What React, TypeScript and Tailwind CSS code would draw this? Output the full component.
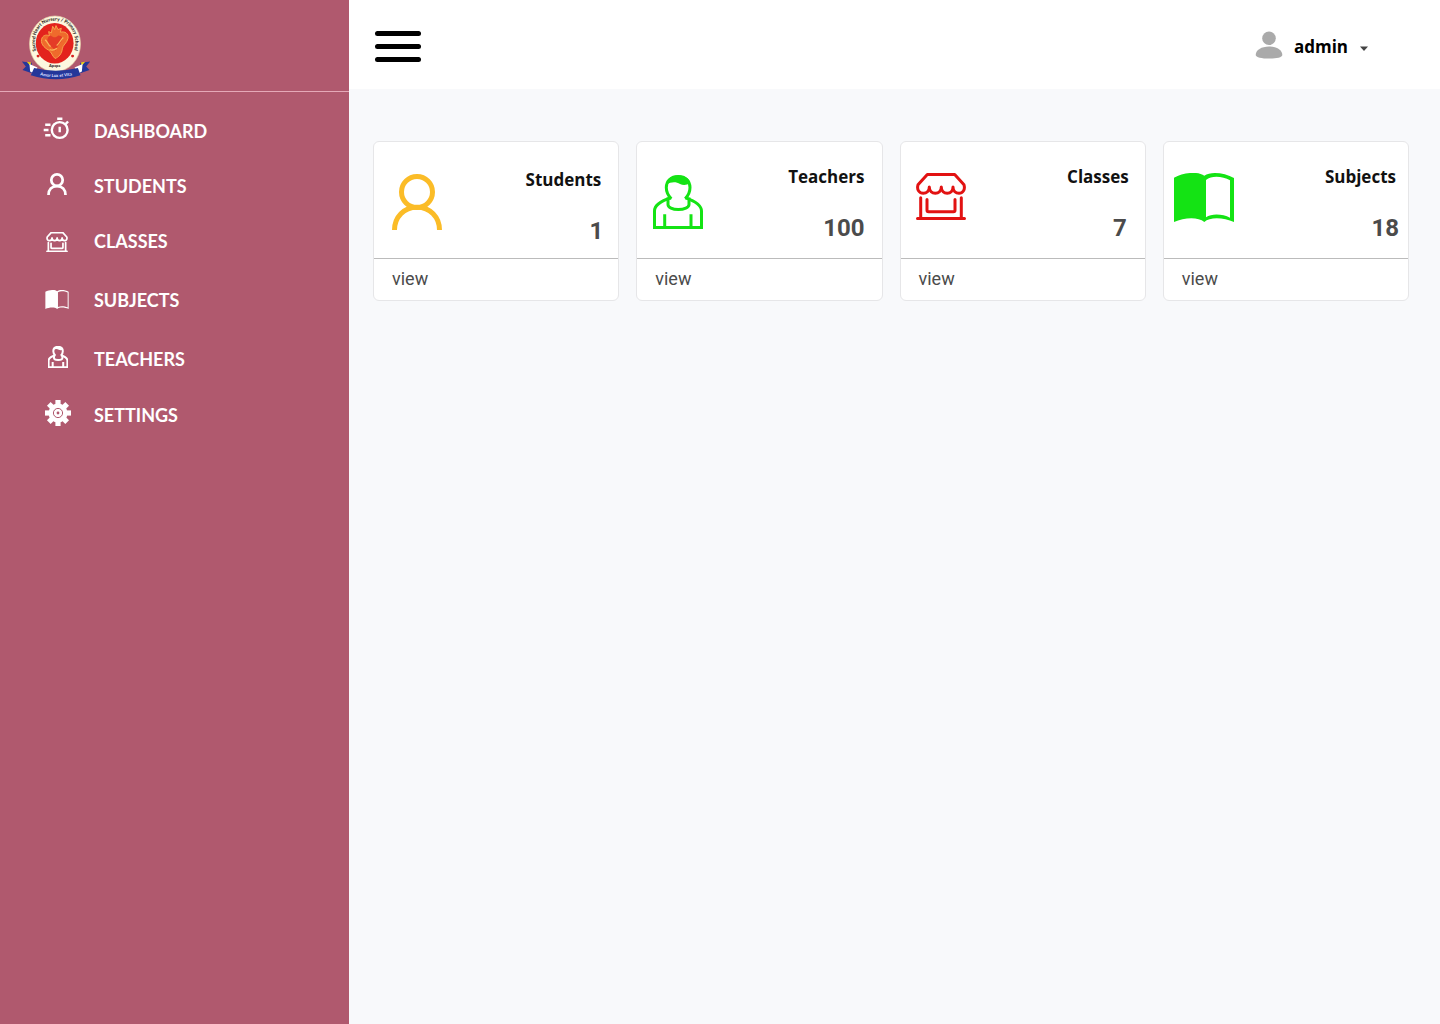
import type { ReactNode } from "react";

type IconProps = { className: string; strokeWidth: number };

function PersonIcon({ className, strokeWidth }: IconProps) {
  return (
    <svg viewBox="0 0 50 56" className={className} fill="none" stroke="currentColor" strokeWidth={strokeWidth} aria-hidden="true">
      <circle cx="25" cy="18" r={18 - strokeWidth / 2} />
      <path d={strokeWidth > 5 ? "M3.4 56C3.4 42 12 33.4 25 33.4S46.6 42 46.6 56" : "M2.5 56C2.5 43 12 33.2 25 33.2S47.5 43 47.5 56"} />
    </svg>
  );
}

function TeacherIcon({ className, strokeWidth }: IconProps) {
  return (
    <svg viewBox="0 0 50 54" className={className} fill="none" stroke="currentColor" strokeWidth={strokeWidth} aria-hidden="true">
      <path d="M18 22.8C8 26 1.5 30.5 1.5 36V52.500H48.500V36C48.5 30.5 42 26 32.5 22.8" />
      <path d="M15 22.500V29.5C15 32.5 19.5 34.5 25.3 34.5S36 32.500 36 29.500V22.500" />
      <path d="M18.300 23.800C15 20.500 13.300 16.500 13.300 12.500C13.300 6 18 1.500 25.200 1.500S37 6 37 12.500C37 16.500 35.300 20.500 32.200 23.800" />
      <path d="M13.500 9.500C14.500 3 19 .5 25.200 .5S36.500 3 37 8.500C33.500 10.200 30 10.500 27 9C23 6.500 18 6.800 13.500 9.500Z" fill="currentColor" stroke="none" />
      <path d="M11.700 39.300V52M38 39.300V52" />
    </svg>
  );
}

function StoreIcon({ className, strokeWidth }: IconProps) {
  return (
    <svg viewBox="0 0 50 47" className={className} fill="none" stroke="currentColor" strokeWidth={strokeWidth} strokeLinecap="round" strokeLinejoin="round" aria-hidden="true">
      <path d="M11.300 1.500H38.700L48 11.800C49.500 17 46.500 20.300 43 20.300C39.800 20.300 37 18 37 14C37 18 34.300 20.300 31.200 20.300S25.300 18 25.300 14C25.300 18 22.500 20.300 19.300 20.300S13.300 18 13.300 14C13.300 18 10.500 20.300 7.300 20.300C3.500 20.300 .5 17 2 11.800Z" />
      <path d="M4.700 24.800V45.400M45.300 24.800V45.400M1.500 45.400H48.500" />
      <path d="M11 26.500V37.200Q11 38.700 12.500 38.700H37.500Q39 38.700 39 37.200V26.500" />
    </svg>
  );
}

function BookIcon({ className, thin }: { className: string; thin?: boolean }) {
  return (
    <svg viewBox="0 0 60 49" className={className} fill="currentColor" fillRule="evenodd" aria-hidden="true">
      <path
        d={
          thin
            ? "M0 4.500C10-.5 24-2 30.300 3.300C37-2 52 0 60 4.500V49C50 44.500 37 43.500 30.300 49C24 43.500 10 44.500 0 49ZM32.500 5.800V43.800C39 40.800 50 41.500 57.500 44.800V6.500C50 3 39 1.500 32.500 5.800Z"
            : "M0 4.700C9-.5 24-2 30.300 2.700C37-2 51 0 60 5V49C50 44.500 36 43.500 30.300 49C24 43.500 10 44.500 0 49ZM32 7V44.300C38 40 49 41 56 44.700V7.300C49 3.500 38 2 32 7Z"
        }
      />
    </svg>
  );
}

function TimerIcon() {
  return (
    <svg viewBox="0 0 27 23" className="h-[23px] w-[27px]" fill="none" stroke="currentColor" strokeWidth="2.4" aria-hidden="true">
      <circle cx="16.700" cy="13" r="7.900" />
      <path d="M14.200 1.800h5.200M16.700 9.800v5.400M22.300 7.300l2.800-2.800M2.200 7.700h5.300M.7 13H5.500M2.200 18.300h5.300" />
    </svg>
  );
}

function GearIcon() {
  return (
    <svg viewBox="-13 -13 26 26" className="size-[26px]" aria-hidden="true">
      <g fill="currentColor">
        <circle r="9.500" />
        <rect x="-2.600" y="-13" width="5.200" height="26" />
        <rect x="-2.600" y="-13" width="5.200" height="26" transform="rotate(45)" />
        <rect x="-2.600" y="-13" width="5.200" height="26" transform="rotate(90)" />
        <rect x="-2.600" y="-13" width="5.200" height="26" transform="rotate(135)" />
      </g>
      <circle r="4.600" fill="none" stroke="#b0596e" strokeWidth="1" />
      <circle r="1.400" fill="#b0596e" />
    </svg>
  );
}

function SchoolLogo() {
  return (
    <svg viewBox="33 22 210 205" className="h-[68px] w-[70px]" role="img" aria-label="Sacred Heart Nursery / Primary School, Apapa">
      <defs>
        <path id="crest-arc" d="M82 146C64 100 80 46 135 45C190 46 206 100 190 144" />
        <path id="ribbon-arc" d="M78 207Q138 223 198 207" />
      </defs>
      <ellipse cx="135" cy="115" rx="77" ry="84" fill="#fdf8df" stroke="#e5cfa8" strokeWidth="2" />
      <ellipse cx="134" cy="113" rx="57" ry="61" fill="#e3231d" />
      <path
        d="M128 62l6 10 4-12 6 12 10-4-3 12c14-4 26 4 23 19-3 14-16 20-17 31-1 14-11 26-22 29-9-8-10-19-19-25-15-8-27-22-20-37 5-9 14-10 22-6l-2-13 8 4Z"
        fill="#ef6a2c"
        stroke="#f7a24c"
        strokeWidth="3"
      />
      <path d="M122 90c8 7 16 7 23 0 12 0 16 9 9 18-6 8-12 15-18 28-7-10-22-17-24-28-1-9 3-16 10-18Z" fill="#e43c27" />
      <path d="M105 103c8 4 8 15 17 20M160 96c-9 7-11 18-20 24M119 132c9 5 14 2 22-4" fill="none" stroke="#f9b75a" strokeWidth="4" />
      <circle cx="84" cy="152" r="4.500" fill="#d8221f" />
      <circle cx="188" cy="152" r="4.500" fill="#d8221f" />
      <text fontFamily="Lato" fontSize="14.500" fontWeight="900" fill="#302b27">
        <textPath href="#crest-arc" startOffset="50%" textAnchor="middle">
          Sacred Heart Nursery / Primary School
        </textPath>
      </text>
      <text x="134" y="186" textAnchor="middle" fontFamily="Lato" fontSize="12" fontWeight="900" fill="#302b27">
        Apapa
      </text>
      <path d="M35 168L65 172V204L37 194L47 183ZM241 168L211 172V204L239 194L229 183Z" fill="#24379a" />
      <path d="M50 169l13 2-3 9ZM226 169l-13 2 3 9Z" fill="#f5d80f" />
      <path d="M58 176L82 186L74 206L60 198ZM218 176L194 186L202 206L216 198Z" fill="#fff" />
      <path d="M72 188Q137 204 204 188L212 210Q138 234 62 210Z" fill="#24379a" />
      <text fontFamily="Lato" fontSize="13" fontWeight="900" fill="#d6dcff">
        <textPath href="#ribbon-arc" startOffset="50%" textAnchor="middle">
          Amor Lux et Vita
        </textPath>
      </text>
    </svg>
  );
}

const navItems: { label: string; icon: ReactNode; row: string; iconBox: string }[] = [
  { label: "DASHBOARD", icon: <TimerIcon />, row: "h-[55px]", iconBox: "w-[112px] pb-1" },
  { label: "STUDENTS", icon: <PersonIcon className="h-[22px] w-5" strokeWidth={7} />, row: "h-[55px]", iconBox: "w-[114px] pb-1" },
  { label: "CLASSES", icon: <StoreIcon className="h-5 w-[22px]" strokeWidth={4} />, row: "h-[55px]", iconBox: "w-[114px] pt-0.5" },
  { label: "SUBJECTS", icon: <BookIcon className="h-[19px] w-6" thin />, row: "h-[63px]", iconBox: "w-[114px]" },
  { label: "TEACHERS", icon: <TeacherIcon className="h-[22px] w-5" strokeWidth={5} />, row: "h-[56px]", iconBox: "w-[116px] pb-1" },
  { label: "SETTINGS", icon: <GearIcon />, row: "h-[55px]", iconBox: "w-[116px] pb-1" },
];

const cards: { title: string; count: number; icon: ReactNode; body: string; titleClass: string; countClass: string }[] = [
  {
    title: "Students",
    count: 1,
    icon: <PersonIcon className="mt-[30px] h-14 w-[50px] text-[#fbbc27]" strokeWidth={5} />,
    body: "pt-[2px] pr-[15px] pl-[18px]",
    titleClass: "mt-6 pr-0.5",
    countClass: "",
  },
  {
    title: "Teachers",
    count: 100,
    icon: <TeacherIcon className="mt-[33px] h-[54px] w-[50px] text-[#14e314]" strokeWidth={3} />,
    body: "pr-[17px] pl-4",
    titleClass: "mt-[23px]",
    countClass: "",
  },
  {
    title: "Classes",
    count: 7,
    icon: <StoreIcon className="mt-[31px] h-[47px] w-[50px] text-[#e21212]" strokeWidth={3} />,
    body: "pr-4 pl-[15px]",
    titleClass: "mt-[23px]",
    countClass: "pr-0.5",
  },
  {
    title: "Subjects",
    count: 18,
    icon: <BookIcon className="mt-[31px] h-[49px] w-[60px] text-[#14e314]" />,
    body: "pr-[9px] pl-[10px]",
    titleClass: "mt-[23px] pr-[3px]",
    countClass: "",
  },
];

export default function App() {
  return (
    <div className="flex min-h-screen bg-[#f8f9fb] font-['Lato',sans-serif]">
      <aside className="w-[349px] shrink-0 bg-[#b0596e] text-white">
        <div className="border-b border-[#e5a9b8] pt-[13px] pb-[10px] pl-[21px]">
          <SchoolLogo />
        </div>
        <nav className="pt-[11px]" aria-label="Main">
          <ul>
            {navItems.map((item) => (
              <li key={item.label}>
                <a href="#" className={"grid grid-cols-[94px_1fr] items-center " + item.row}>
                  <span className={"flex justify-center " + item.iconBox}>{item.icon}</span>
                  <span className="text-lg leading-6 font-bold">{item.label}</span>
                </a>
              </li>
            ))}
          </ul>
        </nav>
      </aside>

      <div className="min-w-0 flex-1">
        <header className="flex h-[89px] items-center justify-between bg-white pr-[72px] pl-[26px]">
          <button type="button" aria-label="Toggle menu" className="mt-[3px] flex flex-col gap-2">
            <span className="h-[5px] w-[46px] rounded-full bg-black" />
            <span className="h-[5px] w-[46px] rounded-full bg-black" />
            <span className="h-[5px] w-[46px] rounded-full bg-black" />
          </button>
          <button type="button" className="flex items-center font-['Open_Sans',sans-serif] text-[17px] leading-7 font-bold text-black">
            <svg viewBox="0 0 28 28" className="mr-[11px] size-7" fill="#aaaaaa" aria-hidden="true">
              <circle cx="14" cy="7.300" r="6.800" />
              <path d="M.7 24C.7 19 6.500 15.500 14 15.500S27.300 19 27.300 24C27.300 26.500 21 27.600 14 27.600S.7 26.500 .7 24Z" />
            </svg>
            <span className="mt-1">admin</span>
            <svg viewBox="0 0 8 5" className="mt-2 ml-3 h-[5px] w-2" fill="#444444" aria-hidden="true">
              <path d="M0 .5H8L4 5Z" />
            </svg>
          </button>
        </header>

        <main className="grid grid-cols-4 gap-[17px] pt-[52px] pr-[31px] pl-6">
          {cards.map((card) => (
            <section key={card.title} className="rounded-md border border-[#e6e6e8] bg-white">
              <div className={"flex h-[117px] items-start justify-between border-b border-[#bbbbbb] " + card.body}>
                {card.icon}
                <div className="text-right">
                  <h2 className={"font-['Open_Sans',sans-serif] text-[17px] leading-6 font-bold text-[#111111] " + card.titleClass}>{card.title}</h2>
                  <p className={"mt-[23px] font-['Roboto',sans-serif] text-2xl font-bold text-[#4b4b4b] " + card.countClass}>{card.count}</p>
                </div>
              </div>
              <a href="#" className="block pt-1.5 pb-2 pl-[18px] font-['Roboto',sans-serif] text-lg leading-[27px] text-[#4b4b4b]">
                view
              </a>
            </section>
          ))}
        </main>
      </div>
    </div>
  );
}
